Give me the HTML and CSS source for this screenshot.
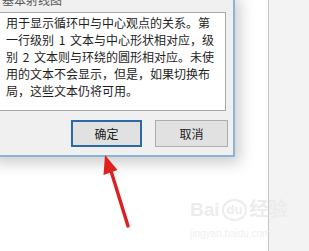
FILE: index.html
```html
<!DOCTYPE html>
<html lang="zh">
<head>
<meta charset="utf-8">
<link rel="stylesheet" href="styles.css">
</head>
<body>
<div class="page">
  <div class="dialog">
    <div class="title">基本射线图</div>
    <div class="desc">用于显示循环中与中心观点的关系。第一行级别 1 文本与中心形状相对应，级别 2 文本则与环绕的圆形相对应。未使用的文本不会显示，但是，如果切换布局，这些文本仍将可用。</div>
    <div class="buttons">
      <button class="btn btn-primary">确定</button>
      <button class="btn">取消</button>
    </div>
  </div>
</div>
<div class="side"></div>
<svg class="arrow" width="309" height="251" viewBox="0 0 309 251">
  <line x1="111" y1="171" x2="128" y2="226" stroke="#dd1f1f" stroke-width="3.4" stroke-linecap="round"/>
  <polygon points="105,155 117.5,170 103.5,175" fill="#e02020"/>
</svg>
<div class="watermark">
  <div class="wm-logo"><span>Bai</span><span class="paw">du</span><span>经验</span></div>
  <div class="wm-url">jingyan.baidu.com</div>
</div>
</body>
</html>
```
FILE: styles.css
```css
html, body {
  margin: 0;
  padding: 0;
}
body {
  width: 309px;
  height: 251px;
  overflow: hidden;
  display: flex;
  position: relative;
  background: #fff;
  font-family: "Noto Sans CJK SC", "Microsoft YaHei", sans-serif;
  color: #1a1a1a;
}
.page {
  width: 268px;
  flex: none;
  background: #fff;
  border-right: 1px solid #c6c6c6;
}
.side {
  flex: 1;
  background: #f3f3f3;
}
.dialog {
  margin-top: -8px;
  margin-left: -12px;
  width: 247px;
  height: 165px;
  box-sizing: border-box;
  padding-left: 11px;
  background: #f0f0f0;
  border-right: 2px solid #8db3d6;
  border-bottom: 2px solid #8db3d6;
  box-shadow: 5px 6px 14px rgba(0, 0, 0, 0.2);
  display: flex;
  flex-direction: column;
}
.title {
  height: 16px;
  line-height: 16px;
  font-size: 12px;
  padding-left: 3px;
  color: #555;
  margin-bottom: 4px;
}
.desc {
  width: 227px;
  height: 99px;
  box-sizing: border-box;
  border: 1px solid #a9a9a9;
  background: #fff;
  padding: 1px 8px 0 6px;
  font-size: 12px;
  line-height: 17px;
  word-spacing: 2px;
  color: #1e1e1e;
}
.buttons {
  display: flex;
  gap: 13px;
  justify-content: flex-end;
  width: 229px;
  margin-top: 9px;
}
.btn {
  width: 73px;
  height: 27px;
  box-sizing: border-box;
  border: 1px solid #adadad;
  background: #e1e1e1;
  font-family: inherit;
  font-size: 12px;
  color: #1a1a1a;
  padding: 0;
  margin: 0;
}
.btn-primary {
  width: 71px;
  border: 2px solid #2a6aa8;
}
.arrow {
  position: absolute;
  left: 0;
  top: 0;
}
.watermark {
  position: absolute;
  left: 190px;
  top: 196px;
  color: #ececec;
  font-family: "Liberation Sans", "Noto Sans CJK SC", sans-serif;
}
.wm-logo {
  display: flex;
  align-items: center;
  font-size: 19px;
  font-weight: bold;
  line-height: 28px;
}
.paw {
  font-size: 13px;
  border: 2px solid #ededed;
  border-radius: 50%;
  padding: 0 3px;
  margin: 0 2px;
  line-height: 18px;
}
.wm-url {
  font-size: 10px;
  line-height: 12px;
  margin-top: 4px;
  color: #efefef;
}
```
